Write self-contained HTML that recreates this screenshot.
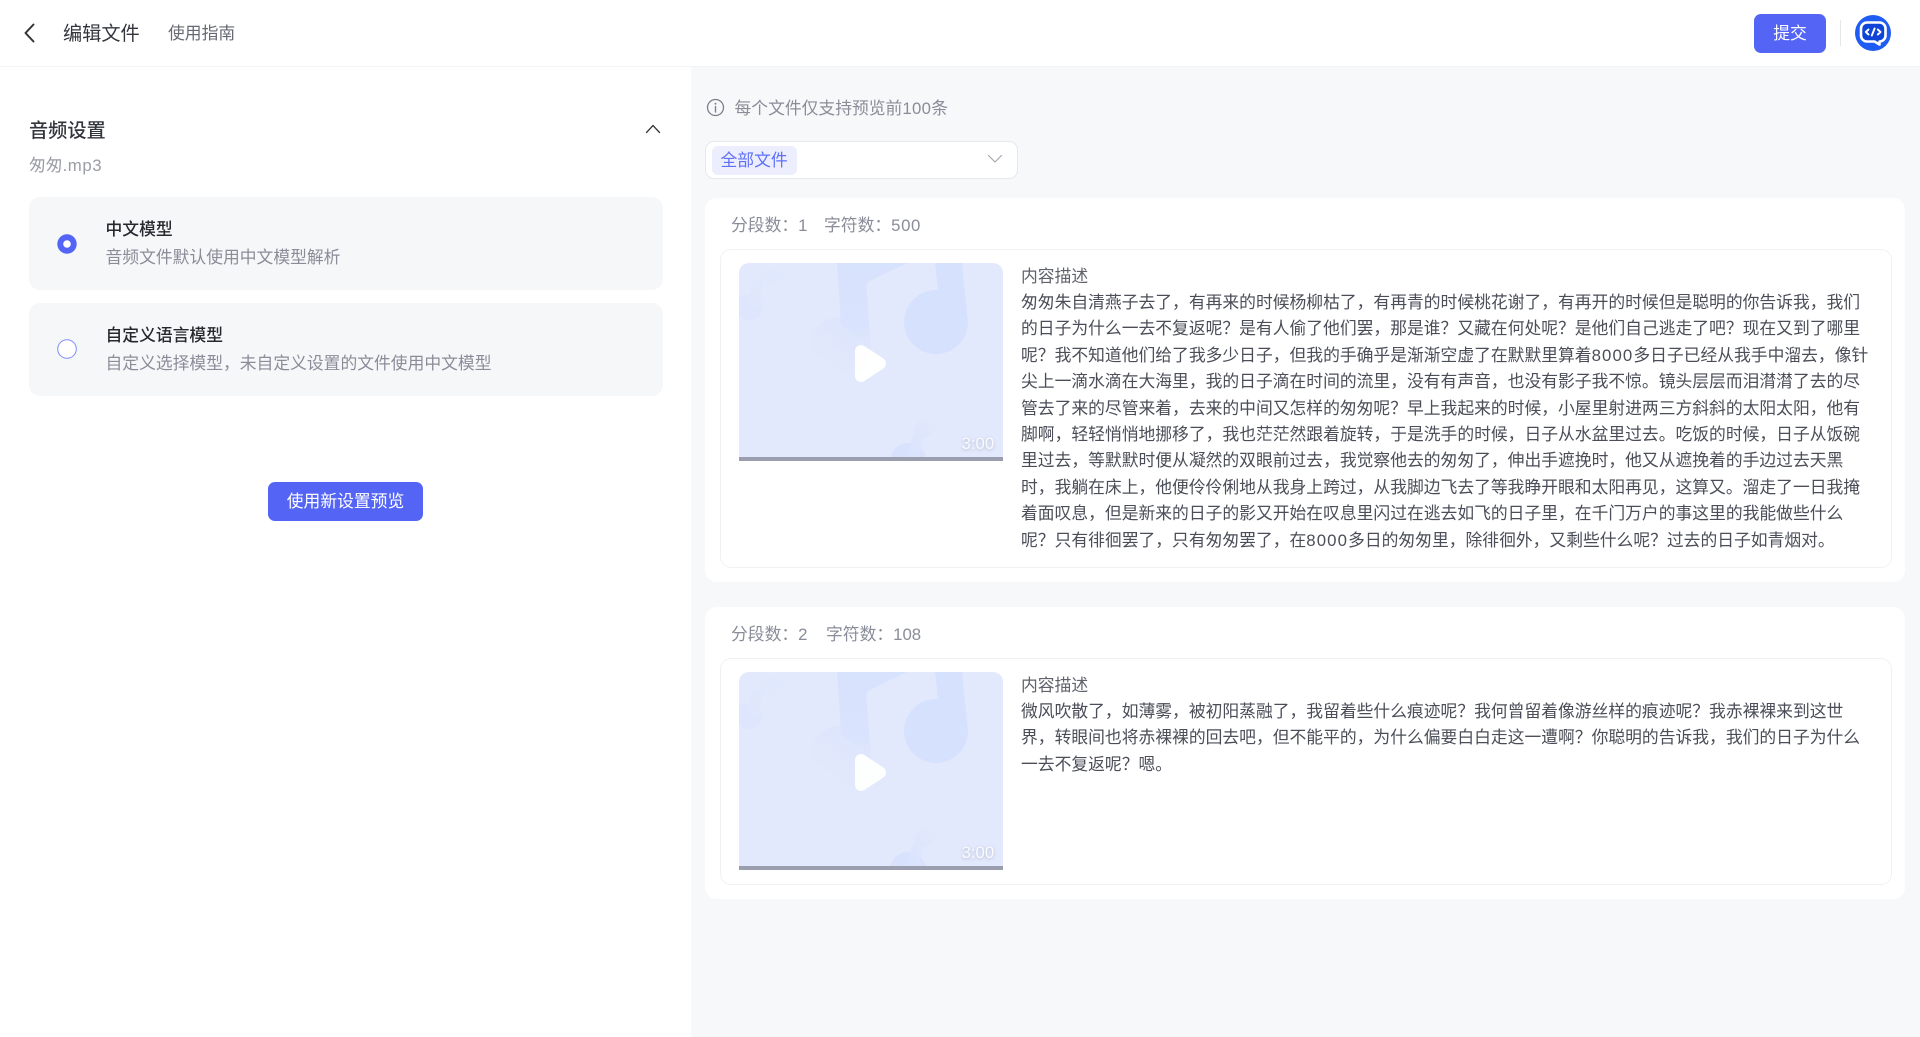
<!DOCTYPE html>
<html lang="zh-CN">
<head>
<meta charset="utf-8">
<title>编辑文件</title>
<style>
html,body{margin:0;padding:0;width:1920px;height:1037px;overflow:hidden;background:#f7f8fa;}
body{position:relative;font-family:"Liberation Sans","Noto Sans CJK SC",sans-serif;font-size:16.8px;color:#4b4e58;}
.a{position:absolute;white-space:nowrap;}
.t{position:absolute;white-space:nowrap;height:26px;line-height:26px;}
.btn{position:absolute;background:#5465f6;color:#fff;border-radius:6px;text-align:center;}
.opt{position:absolute;left:29px;width:634px;height:93px;background:#f6f7f9;border-radius:11px;}
.card{position:absolute;left:705px;width:1200px;background:#fff;border-radius:12px;}
.inner{position:absolute;left:720px;width:1172px;background:#fff;border:1px solid #f0f1f3;border-radius:11px;box-sizing:border-box;}
.thumb{position:absolute;left:738.5px;width:264px;height:198px;}
.gray{color:#8a8d99;}
.lines{position:absolute;left:1021px;color:#4b4e58;line-height:26.4px;white-space:nowrap;}
.lines div{height:26.4px;}
.n{letter-spacing:1.1px;}
.d{letter-spacing:.6px;}
.dur{font-size:16.8px;color:#fff;opacity:.8;text-shadow:0 1px 3px rgba(90,100,130,.45);}
</style>
</head>
<body>
<div class="a" style="left:0;top:0;width:691px;height:1037px;background:#fff;"></div>
<div class="a" style="left:0;top:0;width:1920px;height:66px;background:#fff;"></div>
<div class="a" style="left:0;top:66px;width:1920px;height:1px;background:#f3f4f6;"></div>

<svg class="a" style="left:22px;top:22px" width="18" height="22" viewBox="0 0 18 22"><path d="M11.5 2.5 L3.5 11 L11.5 19.5" fill="none" stroke="#333" stroke-width="2" stroke-linecap="round" stroke-linejoin="round"/></svg>
<div class="t" style="left:63px;top:21.500px;font-size:19.2px;color:#33353d;">编辑文件</div>
<div class="t" style="left:168px;top:21px;color:#666973;">使用指南</div>

<div class="btn" style="left:1754px;top:14px;width:72px;height:38.5px;line-height:40px;border-radius:7px;">提交</div>
<div class="a" style="left:1840px;top:20px;width:1px;height:26px;background:#e6e7ea;"></div>
<svg class="a" style="left:1855px;top:15px" width="36" height="36" viewBox="0 0 36 36">
<circle cx="18" cy="18" r="18" fill="#1f5cf2"/>
<path d="M12 7.500 H24.500 A6 6 0 0 1 30.500 13.500 V20.500 A6 6 0 0 1 24.500 26.500 V29.500 L19.500 26.500 H12 A6 6 0 0 1 6 20.500 V13.500 A6 6 0 0 1 12 7.500 Z" fill="#0f45d6" stroke="#fff" stroke-width="2.6" stroke-linejoin="round"/>
<path d="M13.500 14.500 L10.800 17 L13.500 19.500 M22.800 14.500 L25.500 17 L22.800 19.500 M19.600 13.500 L16.800 20.500" fill="none" stroke="#fff" stroke-width="1.9" stroke-linecap="round" stroke-linejoin="round"/>
</svg>

<div class="t" style="left:29px;top:118.500px;font-size:19.2px;font-weight:500;color:#33353d;">音频设置</div>
<svg class="a" style="left:645px;top:122px" width="16" height="14" viewBox="0 0 16 14"><path d="M1.5 10.5 L8 3.5 L14.5 10.5" fill="none" stroke="#33353d" stroke-width="1.3" stroke-linecap="round" stroke-linejoin="round"/></svg>
<div class="t gray" style="left:29px;top:153px;color:#9a9ca6;">匆匆<span style="letter-spacing:.55px">.mp3</span></div>

<div class="opt" style="top:197px;"></div>
<svg class="a" style="left:57px;top:233.500px" width="20" height="20" viewBox="0 0 20 20"><circle cx="10" cy="10" r="9.7" fill="#5465f6"/><circle cx="10" cy="10" r="3.8" fill="#fff"/></svg>
<div class="t" style="left:105.500px;top:216.500px;font-weight:500;color:#26282e;">中文模型</div>
<div class="t gray" style="left:105.500px;top:244.500px;">音频文件默认使用中文模型解析</div>

<div class="opt" style="top:303px;"></div>
<svg class="a" style="left:57px;top:339px" width="20" height="20" viewBox="0 0 20 20"><circle cx="10" cy="10" r="9.3" fill="#fff" stroke="#7f8cf8" stroke-width="1"/></svg>
<div class="t" style="left:105.500px;top:322.500px;font-weight:500;color:#26282e;">自定义语言模型</div>
<div class="t gray" style="left:105.500px;top:350.500px;">自定义选择模型，未自定义设置的文件使用中文模型</div>

<div class="btn" style="left:268px;top:482px;width:155px;height:38.5px;line-height:40px;border-radius:7px;">使用新设置预览</div>

<svg class="a" style="left:706px;top:98px" width="19" height="19" viewBox="0 0 19 19"><circle cx="9.5" cy="9.5" r="8" fill="none" stroke="#7c7f8c" stroke-width="1.3"/><path d="M9.5 8.6 V14" stroke="#7c7f8c" stroke-width="1.4" stroke-linecap="round"/><circle cx="9.5" cy="5.8" r="1" fill="#7c7f8c"/></svg>
<div class="t gray" style="left:734.500px;top:96px;">每个文件仅支持预览前<span style="letter-spacing:.3px">100</span>条</div>

<div class="a" style="left:705px;top:141px;width:313px;height:38px;background:#fff;border:1px solid #e6e8ec;border-radius:9px;box-sizing:border-box;"></div>
<div class="a" style="left:711.500px;top:146px;width:85.500px;height:28.5px;background:#eceefe;border-radius:6px;"></div>
<div class="t" style="left:720.500px;top:148px;color:#5f70f7;">全部文件</div>
<svg class="a" style="left:987px;top:153px" width="16" height="12" viewBox="0 0 16 12"><path d="M1.5 2.5 L8 9 L14.5 2.5" fill="none" stroke="#a4a7b0" stroke-width="1.2" stroke-linecap="round" stroke-linejoin="round"/></svg>

<svg width="0" height="0" style="position:absolute">
<defs>
<linearGradient id="fade" x1="0.85" y1="0" x2="0.15" y2="1"><stop offset="0" stop-color="#dbe4fd"/><stop offset=".8" stop-color="#e3e9fc"/></linearGradient>
<linearGradient id="stem" x1="0" y1="0" x2="0" y2="1"><stop offset="0" stop-color="#d7e2fd"/><stop offset=".75" stop-color="#dae3fd"/><stop offset="1" stop-color="#dfe7fc"/></linearGradient>
<linearGradient id="fade2" x1="1" y1="0" x2="0" y2="1"><stop offset="0" stop-color="#e3e9fc"/><stop offset="1" stop-color="#d9e3fd"/></linearGradient>
<g id="art">
<rect width="264" height="198" fill="#e3e9fc"/>
<circle cx="101" cy="85" r="31" fill="url(#fade)"/>
<path d="M98 0 H168 L131 18 Q127 20 127.500 26 L132 85 L102 62 Z" fill="url(#stem)"/>
<path d="M196 0 H223 L229 59 A32 32 0 1 1 197 27 L199 27 Z" fill="#d6e1fd"/>
<path d="M11 31 A13 13 0 1 1 0 52 V33 Z" fill="#dde6fd"/>
<path d="M13 44 L19 18" stroke="#dfe7fd" stroke-width="11" fill="none"/>
<path d="M21 17 C24 2 36 4 46 12 C40 24 30 24 24 21 Z" fill="#e0e8fd"/>
<circle cx="169" cy="198" r="18" fill="#d8e2fd"/>
<path d="M170 185 L178 160 C182 152 192 158 198 164 C194 172 186 174 184 176 L179 198 H168 Z" fill="url(#fade2)"/>
<path d="M122 88 L141 100.500 L122 113 Z" fill="#fff" stroke="#fff" stroke-width="12" stroke-linejoin="round" opacity=".96"/>
<rect y="194" width="264" height="4" fill="#9a9eae"/>
</g>
<clipPath id="cp"><path d="M10 0 H254 A10 10 0 0 1 264 10 V198 H0 V10 A10 10 0 0 1 10 0 Z"/></clipPath>
</defs>
</svg>

<div class="card" style="top:198px;height:384px;"></div>
<div class="t gray" style="left:731px;top:213px;">分段数：1</div>
<div class="t gray" style="left:824px;top:213px;">字符数：<span class="d">500</span></div>
<div class="inner" style="top:248.500px;height:319px;"></div>
<svg class="thumb" style="top:263px" viewBox="0 0 264 198"><g clip-path="url(#cp)"><use href="#art"/></g></svg>
<div class="t dur" style="left:961.500px;top:431px;">3:00</div>
<div class="t" style="left:1021px;top:264px;color:#5f626c;">内容描述</div>
<div class="lines" style="top:290px;">
<div>匆匆朱自清燕子去了，有再来的时候杨柳枯了，有再青的时候桃花谢了，有再开的时候但是聪明的你告诉我，我们</div>
<div>的日子为什么一去不复返呢？是有人偷了他们罢，那是谁？又藏在何处呢？是他们自己逃走了吧？现在又到了哪里</div>
<div>呢？我不知道他们给了我多少日子，但我的手确乎是渐渐空虚了在默默里算着<span class="n">8000</span>多日子已经从我手中溜去，像针</div>
<div>尖上一滴水滴在大海里，我的日子滴在时间的流里，没有有声音，也没有影子我不惊。镜头层层而泪潸潸了去的尽</div>
<div>管去了来的尽管来着，去来的中间又怎样的匆匆呢？早上我起来的时候，小屋里射进两三方斜斜的太阳太阳，他有</div>
<div>脚啊，轻轻悄悄地挪移了，我也茫茫然跟着旋转，于是洗手的时候，日子从水盆里过去。吃饭的时候，日子从饭碗</div>
<div>里过去，等默默时便从凝然的双眼前过去，我觉察他去的匆匆了，伸出手遮挽时，他又从遮挽着的手边过去天黑</div>
<div>时，我躺在床上，他便伶伶俐地从我身上跨过，从我脚边飞去了等我睁开眼和太阳再见，这算又。溜走了一日我掩</div>
<div>着面叹息，但是新来的日子的影又开始在叹息里闪过在逃去如飞的日子里，在千门万户的事这里的我能做些什么</div>
<div>呢？只有徘徊罢了，只有匆匆罢了，在<span class="n">8000</span>多日的匆匆里，除徘徊外，又剩些什么呢？过去的日子如青烟对。</div>
</div>

<div class="card" style="top:607px;height:292px;"></div>
<div class="t gray" style="left:731px;top:622px;">分段数：2</div>
<div class="t gray" style="left:826px;top:622px;">字符数：108</div>
<div class="inner" style="top:658px;height:227px;"></div>
<svg class="thumb" style="top:672px" viewBox="0 0 264 198"><g clip-path="url(#cp)"><use href="#art"/></g></svg>
<div class="t dur" style="left:961.500px;top:840px;">3:00</div>
<div class="t" style="left:1021px;top:673px;color:#5f626c;">内容描述</div>
<div class="lines" style="top:699px;">
<div>微风吹散了，如薄雾，被初阳蒸融了，我留着些什么痕迹呢？我何曾留着像游丝样的痕迹呢？我赤裸裸来到这世</div>
<div>界，转眼间也将赤裸裸的回去吧，但不能平的，为什么偏要白白走这一遭啊？你聪明的告诉我，我们的日子为什么</div>
<div>一去不复返呢？嗯。</div>
</div>
</body>
</html>
